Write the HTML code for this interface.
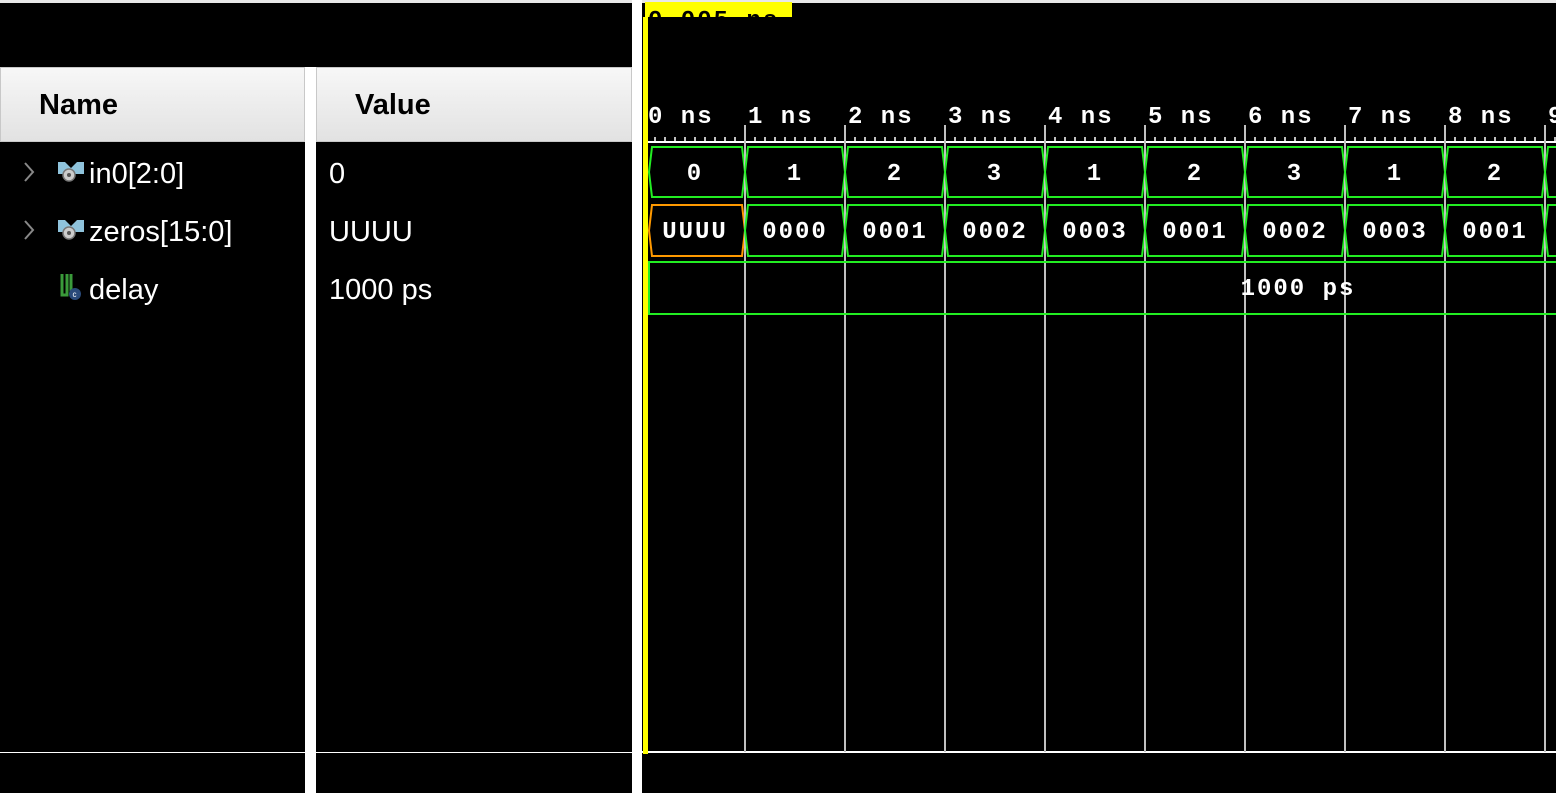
<!DOCTYPE html>
<html><head><style>
body{margin:0;width:1556px;height:793px;background:#000;overflow:hidden;position:relative;font-family:"Liberation Sans",sans-serif}
.a{position:absolute}
.hdr{background:linear-gradient(#f7f7f7,#e2e2e2);border:1px solid #c8c8c8;box-sizing:border-box;font-weight:bold;font-size:29px;color:#000;line-height:74px}
.t{color:#fff;font-size:29px;line-height:30px}
</style></head><body>
<div class="a" style="left:0;top:0;width:1556px;height:3px;background:#e8e8e8"></div>
<div class="a" style="left:305px;top:67px;width:11px;height:726px;background:#fff"></div>
<div class="a" style="left:632px;top:0;width:10px;height:793px;background:#fff"></div>
<div class="a hdr" style="left:0;top:67px;width:305px;height:75px;padding-left:38px">Name</div>
<div class="a hdr" style="left:316px;top:67px;width:316px;height:75px;padding-left:38px">Value</div>
<div class="a" style="left:0;top:752px;width:305px;height:1px;background:#fff"></div>
<div class="a" style="left:316px;top:752px;width:316px;height:1px;background:#fff"></div>

<svg class="a" style="left:18px;top:160px" width="20" height="90"><path d="M7 3l8 9-8 9M7 61l8 9-8 9" stroke="#888" stroke-width="2" fill="none"/></svg>
<svg class="a" style="left:57px;top:160px" width="30" height="150">
<g><path d="M1 2h7l6 6 6-6h7v12H1z" fill="#8fc3dc"/><circle cx="12" cy="15" r="6" fill="#ccc" stroke="#777" stroke-width="1.5"/><circle cx="12" cy="15" r="2" fill="#555"/></g>
<g transform="translate(0,58)"><path d="M1 2h7l6 6 6-6h7v12H1z" fill="#8fc3dc"/><circle cx="12" cy="15" r="6" fill="#ccc" stroke="#777" stroke-width="1.5"/><circle cx="12" cy="15" r="2" fill="#555"/></g>
<path d="M5 114v21h5v-21M14 114v18" stroke="#3a9a3a" stroke-width="3" fill="none"/><circle cx="18" cy="134" r="6" fill="#2a4a7a"/><text x="15.5" y="137" font-size="8" fill="#fff" font-family="Liberation Sans">c</text>
</svg>
<div class="a t" style="left:89px;top:159px">in0[2:0]</div>
<div class="a t" style="left:89px;top:217px">zeros[15:0]</div>
<div class="a t" style="left:89px;top:275px">delay</div>
<div class="a t" style="left:329px;top:159px">0</div>
<div class="a t" style="left:329px;top:217px">UUUU</div>
<div class="a t" style="left:329px;top:275px">1000 ps</div>

<svg class="a" style="left:0;top:0" width="1556" height="793" id="w">
<rect x="645" y="2" width="147" height="15" fill="#ff0"/>
<text x="648" y="27" font-family="Liberation Mono" font-weight="bold" font-size="24" letter-spacing="2" fill="#000">0.005 ns</text>
<rect x="642" y="17" width="914" height="735" fill="#000"/>
<line x1="642" y1="752" x2="1556" y2="752" stroke="#fff" stroke-width="2"/>
<line x1="648" y1="142" x2="1556" y2="142" stroke="#fff" stroke-width="2"/>
</svg>
<script>
var s=document.getElementById('w'),h='';
var v1=['0','1','2','3','1','2','3','1','2','3'],v2=['UUUU','0000','0001','0002','0003','0001','0002','0003','0001','0002'];
var F=' font-family="Liberation Mono" font-weight="bold" font-size="24" letter-spacing="2" fill="#fff"';
for(var i=0;i<10;i++){var B=645+100*i;
 if(i>0)h+='<line x1="'+B+'" y1="125" x2="'+B+'" y2="752" stroke="#c0c0c0" stroke-width="2"/>';
 for(var k=1;k<10;k++){var x=B+k*10;h+='<line x1="'+x+'" y1="137" x2="'+x+'" y2="142" stroke="#fff" stroke-width="1.5"/>';}
 h+='<text x="'+(B+3)+'" y="123"'+F+'>'+i+' ns</text>';
 var L=i==0?649:B;
 function p(y0,y1,c){var m=(y0+y1)/2;return '<polygon points="'+(L+3)+','+y0+' '+(B+97)+','+y0+' '+(B+100)+','+m+' '+(B+97)+','+y1+' '+(L+3)+','+y1+' '+L+','+m+'" fill="none" stroke="'+c+'" stroke-width="2"/>';}
 h+=p(147,197,'#22ee22');h+=p(205,256,i==0?'#ff9900':'#22ee22');
 h+='<text x="'+(B+50)+'" y="180" text-anchor="middle"'+F+'>'+v1[i]+'</text>';
 h+='<text x="'+(B+50)+'" y="238" text-anchor="middle"'+F+'>'+v2[i]+'</text>';
}
h+='<path d="M1556 262H649v52H1556" fill="none" stroke="#22ee22" stroke-width="2"/>';
h+='<text x="1298" y="295" text-anchor="middle"'+F+'>1000 ps</text>';
h+='<rect x="643" y="17" width="5" height="737" fill="#ff0"/>';
s.insertAdjacentHTML('beforeend',h);
</script>
</body></html>
